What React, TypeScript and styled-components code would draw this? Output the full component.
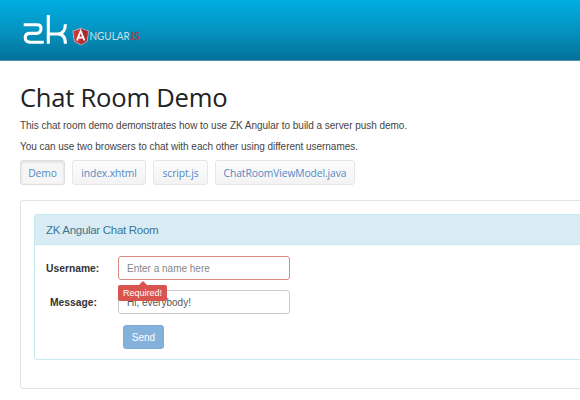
import React from "react";
import styled, { createGlobalStyle, css } from "styled-components";

const GlobalStyle = createGlobalStyle`
  * { box-sizing: border-box; }
  html, body { margin: 0; padding: 0; background: #fff; overflow: hidden; }
  body { font-family: "Liberation Sans", Arial, sans-serif; font-size: 10px; color: #444; }
  h1, h2, p { margin: 0; font-weight: 400; }
`;

const Page = styled.div`
  width: 580px;
  height: 400px;
  overflow: hidden;
`;

const Header = styled.header`
  height: 61px;
  padding: 14px 0 0 22px;
  background: linear-gradient(#00aee3 0%, #0495c3 48%, #047299 100%);
  border-bottom: 1px solid #4d94ac;
`;

const Main = styled.main`
  width: 640px;
  padding: 21px 0 0 20px;
`;

const Title = styled.h1`
  font: 400 25.6px/31px "Open Sans", "Noto Sans", sans-serif;
  letter-spacing: -0.25px;
  color: #222;
  white-space: nowrap;
`;

const Intro = styled.p`
  font-size: 10px;
  line-height: 15px;
  letter-spacing: -0.03px;
  white-space: nowrap;
  margin-top: 6px;
  &:first-of-type { margin-top: 5px; }
`;

const Tabs = styled.nav`
  display: flex;
  gap: 7px;
  margin-top: 6px;
`;

const Tab = styled.button<{ $width: number; $active?: boolean }>`
  width: ${(p) => p.$width}px;
  height: 25px;
  padding: 0;
  border: 1px solid #e6e6e6;
  border-radius: 3px;
  background: linear-gradient(#fdfdfd, #f3f3f3);
  color: #5089c6;
  font: 400 10.3px/22px "Open Sans", "Noto Sans", sans-serif;
  letter-spacing: -0.1px;
  white-space: nowrap;
  ${(p) =>
    p.$active &&
    css`
      border-color: #dedede;
      background: #f6f6f6;
      box-shadow: inset 0 1px 3px rgba(0, 0, 0, 0.12);
    `}
`;

const Frame = styled.section`
  height: 189px;
  margin-top: 15px;
  padding: 13px;
  border: 1px solid #e2e2e2;
  border-radius: 3px;
`;

const Panel = styled.div`
  height: 146px;
  border: 1px solid #c4e9f1;
  border-radius: 3px;
`;

const PanelTitle = styled.h2`
  height: 30px;
  padding-left: 11px;
  border-bottom: 1px solid #c4e9f1;
  background: #d9ecf5;
  color: #3a7690;
  font-size: 11.5px;
  letter-spacing: -0.3px;
  line-height: 31px;
`;

const Form = styled.form`
  display: grid;
  grid-template-columns: 72px 172px;
  grid-auto-rows: 24px;
  row-gap: 10px;
  padding: 11px 0 0 11px;
`;

const Label = styled.label<{ $indent?: number }>`
  padding-left: ${(p) => p.$indent ?? 0}px;
  color: #333;
  font-weight: 700;
  font-size: 10.3px;
  line-height: 25px;
`;

const Field = styled.div`
  position: relative;
`;

const Input = styled.input<{ $invalid?: boolean }>`
  display: block;
  width: 172px;
  height: 24px;
  padding: 0 8px;
  border: 1px solid ${(p) => (p.$invalid ? "#dc8583" : "#ccc")};
  border-radius: 3px;
  background: #fff;
  color: #555;
  font: 10px "Liberation Sans", Arial, sans-serif;
  outline: 0;
  &::placeholder { color: #858585; opacity: 1; }
`;

const Tooltip = styled.div`
  position: absolute;
  z-index: 1;
  left: 0;
  top: 29px;
  width: 49px;
  height: 16px;
  border-radius: 2px;
  background: #d9534f;
  color: #fff;
  font-size: 9px;
  line-height: 16px;
  text-align: center;
  &::before {
    content: "";
    position: absolute;
    left: 21px;
    top: -4px;
    border: solid transparent;
    border-width: 0 4px 4px;
    border-bottom-color: #d9534f;
  }
`;

const SendButton = styled.button`
  grid-column: 2;
  width: 41px;
  height: 24px;
  margin: 1px 0 0 5px;
  padding: 0;
  border: 1px solid #7cabd5;
  border-radius: 3px;
  background: #85b2db;
  color: #fff;
  font: 10px "Liberation Sans", Arial, sans-serif;
`;

const Logo = () => (
  <svg width="122" height="34" viewBox="22 14 122 34" role="img" aria-label="ZK AngularJS">
    <g fill="none" stroke="#fff" strokeWidth="3.1" strokeLinejoin="round">
      <path d="M23.7 24.7H37C39.8 24.7 41 26.2 41 28.6S39.5 33.4 36.5 33.4H30C26.8 33.4 25.2 35 25.2 37.6S26.8 42.2 30 42.2H43.8" />
      <path d="M48.3 15V43.7M48.3 34H57.5C62.5 34 65.4 30 65.4 24.2M57.5 34C62.5 34 65.4 37.5 65.4 43.7" />
    </g>
    <path d="M80.7 27.8L89 30.7L87.6 41.6L80.7 45.5L73.8 41.6L72.4 30.7Z" fill="#b3b3b3" />
    <path d="M80.7 28.8L87.9 31.3L86.7 41L80.7 44.4L74.7 41L73.5 31.3Z" fill="#c8393a" />
    <path d="M80.7 28.8L87.9 31.3L86.7 41L80.7 44.4Z" fill="#a92c31" />
    <path d="M76.9 40.5L80.7 31L84.5 40.5M78 37.6H83.4" fill="none" stroke="#fff" strokeWidth="1.8" />
    <text x="89.4" y="40.2" fill="#d0e0e7" fontFamily="Lato, sans-serif" fontSize="10.5" textLength="50" lengthAdjust="spacingAndGlyphs">
      NGULAR<tspan fill="#a03c44" stroke="#a03c44" strokeWidth="0.4">JS</tspan>
    </text>
  </svg>
);

export default function App() {
  return (
    <Page>
      <GlobalStyle />
      <Header>
        <Logo />
      </Header>
      <Main>
        <Title>Chat Room Demo</Title>
        <Intro>This chat room demo demonstrates how to use ZK Angular to build a server push demo.</Intro>
        <Intro>You can use two browsers to chat with each other using different usernames.</Intro>
        <Tabs>
          <Tab $width={45} $active>Demo</Tab>
          <Tab $width={74}>index.xhtml</Tab>
          <Tab $width={55}>script.js</Tab>
          <Tab $width={140}>ChatRoomViewModel.java</Tab>
        </Tabs>
        <Frame>
          <Panel>
            <PanelTitle>ZK Angular Chat Room</PanelTitle>
            <Form onSubmit={(e) => e.preventDefault()}>
              <Label htmlFor="username">Username:</Label>
              <Field>
                <Input id="username" placeholder="Enter a name here" $invalid />
                <Tooltip role="alert">Required!</Tooltip>
              </Field>
              <Label htmlFor="message" $indent={4}>Message:</Label>
              <Input id="message" defaultValue="Hi, everybody!" />
              <SendButton type="submit">Send</SendButton>
            </Form>
          </Panel>
        </Frame>
      </Main>
    </Page>
  );
}
